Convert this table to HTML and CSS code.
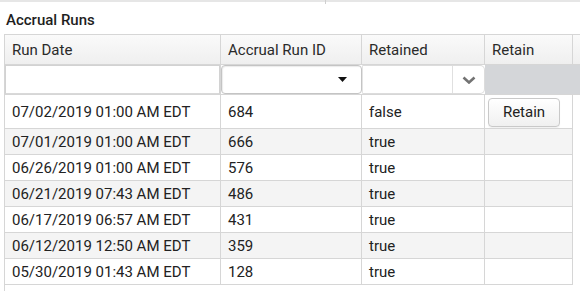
FILE: index.html
```html
<!DOCTYPE html>
<html>
<head>
<meta charset="utf-8">
<link rel="stylesheet" href="styles.css">
</head>
<body>
<div class="topbar"><div class="tick"></div></div>
<div class="title">Accrual Runs</div>
<div class="grid">
  <table class="tbl">
    <thead>
      <tr class="hdr">
        <th class="c1">Run Date</th>
        <th class="c2">Accrual Run ID</th>
        <th class="c3">Retained</th>
        <th class="c4">Retain</th>
        <th class="c5"></th>
      </tr>
      <tr class="filter">
        <td class="f1"><div class="finput"></div></td>
        <td class="f2"><div class="fselect"><svg width="9" height="5" viewBox="0 0 9 5"><polygon points="0,0 9,0 4.5,5" fill="#111"/></svg></div></td>
        <td class="f3"><div class="fcombo"><div class="fcombo-text"></div><div class="fcombo-btn"><svg width="14" height="8" viewBox="0 0 14 8"><path d="M1.5 1.5 L7 6.5 L12.5 1.5" fill="none" stroke="#737373" stroke-width="2.6"/></svg></div></div></td>
        <td class="f4"></td>
        <td class="f5"></td>
      </tr>
    </thead>
    <tbody>
      <tr class="first"><td>07/02/2019 01:00 AM EDT</td><td>684</td><td>false</td><td class="btncell"><button class="btn">Retain</button></td><td class="filler"></td></tr>
      <tr class="alt"><td>07/01/2019 01:00 AM EDT</td><td>666</td><td>true</td><td></td><td class="filler"></td></tr>
      <tr><td>06/26/2019 01:00 AM EDT</td><td>576</td><td>true</td><td></td><td class="filler"></td></tr>
      <tr class="alt"><td>06/21/2019 07:43 AM EDT</td><td>486</td><td>true</td><td></td><td class="filler"></td></tr>
      <tr><td>06/17/2019 06:57 AM EDT</td><td>431</td><td>true</td><td></td><td class="filler"></td></tr>
      <tr class="alt"><td>06/12/2019 12:50 AM EDT</td><td>359</td><td>true</td><td></td><td class="filler"></td></tr>
      <tr><td>05/30/2019 01:43 AM EDT</td><td>128</td><td>true</td><td></td><td class="filler"></td></tr>
    </tbody>
  </table>
</div>
</body>
</html>
```
FILE: styles.css
```css
html, body {
  margin: 0;
  padding: 0;
  background: #ffffff;
  overflow: hidden;
}
body {
  font-family: Roboto, "Liberation Sans", sans-serif;
  color: #222;
  width: 580px;
  height: 291px;
}
.topbar {
  height: 2px;
  background: #e6e6e6;
}
.tick {
  margin-left: 325px;
  width: 1px;
  height: 4px;
  background: #cfcfcf;
}
.title {
  margin-top: 9px;
  margin-left: 6px;
  font-size: 15px;
  line-height: 18px;
  font-weight: 500;
  color: #1e1e1e;
}
.grid {
  margin-top: 5px;
  margin-left: 4px;
  border-left: 1px solid #d6d6d6;
  height: 257px;
  overflow: hidden;
}
.tbl {
  border-collapse: separate;
  border-spacing: 0;
  table-layout: fixed;
  width: 598px;
  font-size: 15px;
}
.tbl th, .tbl td {
  box-sizing: border-box;
  padding: 0 0 0 7px;
  text-align: left;
  font-weight: 400;
  vertical-align: middle;
  white-space: nowrap;
  overflow: hidden;
  border-right: 1px solid #d6d6d6;
  border-bottom: 1px solid #d6d6d6;
  line-height: 18px;
}
.c1 { width: 216px; }
.c2 { width: 141px; }
.c3 { width: 123px; }
.c4 { width: 88px; }
.c5 { width: 30px; }
.hdr th {
  height: 31px;
  border-top: 1px solid #d6d6d6;
  background: linear-gradient(#fafafa, #efefef);
  color: #2a2a2a;
}
.filter td {
  height: 30px;
  padding: 0;
  background: #ffffff;
}
.filter td.f4, .filter td.f5 {
  background: #d4d6d9;
  border-right: none;
}
.finput {
  height: 29px;
  border: 1px solid #d2d2d2;
  border-bottom-color: #d9d9d9;
  box-sizing: border-box;
  background: #fff;
}
.fselect {
  height: 29px;
  box-sizing: border-box;
  border: 1px solid #c4c4c4;
  border-radius: 4px;
  box-shadow: inset 1px 1px 1px rgba(0,0,0,0.08);
  background: #fff;
  display: flex;
  align-items: center;
  justify-content: flex-end;
  padding-right: 14px;
}
.fselect svg { display: block; }
.tbl td.f2 { border-right: 0; }
.fcombo {
  height: 29px;
  box-sizing: border-box;
  border: 1px solid #dcdcdc;
  border-left-color: #e4e4e4;
  border-radius: 0 5px 5px 0;
  background: #fff;
  display: flex;
}
.fcombo-text { flex: 1; }
.fcombo-btn {
  width: 31px;
  border-left: 1px solid #e0e0e0;
  display: flex;
  align-items: center;
  justify-content: center;
}
.fcombo-btn svg { display: block; margin-left: 1px; }
.tbl td.f3 { border-right: 0; }
tbody tr td {
  height: 26px;
  color: #222;
}
tbody tr.first td {
  height: 34px;
}
tbody tr.alt td {
  background: #f4f4f4;
}
.tbl tbody td.filler {
  background: #fff;
  border: none;
}
.tbl td.btncell {
  padding-left: 3px;
}
.btn {
  display: block;
  width: 72px;
  height: 29px;
  margin-top: 1px;
  padding: 0;
  font-family: Roboto, "Liberation Sans", sans-serif;
  font-size: 15px;
  color: #222;
  border: 1px solid #c9c9c9;
  border-radius: 4px;
  background: linear-gradient(#ffffff, #f0f0f0);
  box-shadow: 0 1px 1px rgba(0,0,0,0.06);
}
```
